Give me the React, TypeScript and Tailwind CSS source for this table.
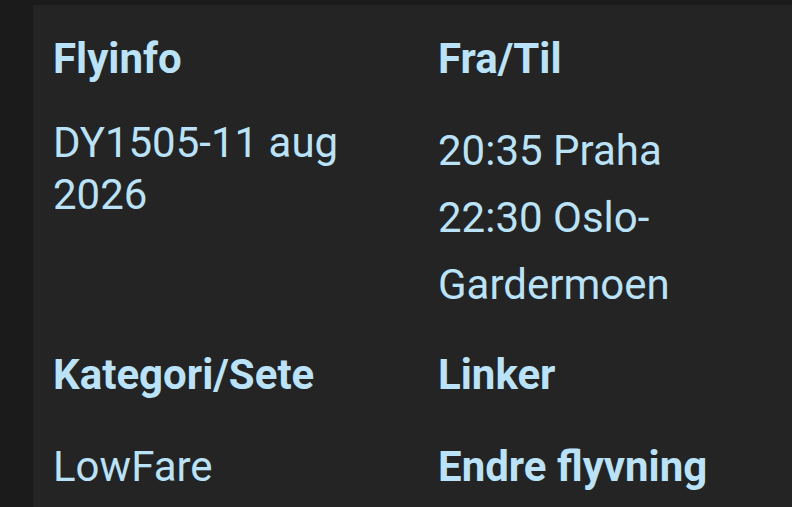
import React from 'react';

interface InfoCellProps {
  title: string;
  children: React.ReactNode;
}

const InfoCell: React.FC<InfoCellProps> = ({ title, children }) => (
  <div>
    <h3 className="text-[42px] font-bold leading-[50px]">{title}</h3>
    <div className="mt-[33px]">{children}</div>
  </div>
);

const App: React.FC = () => {
  return (
    <div className="h-[507px] w-[792px] overflow-hidden bg-[#1b1b1b] pt-[5px] pl-[33px] font-['Roboto',sans-serif] text-[#bae2f8]">
      <div className="h-full bg-[#242424] pl-[20px] pt-[29px]">
        <div className="grid grid-cols-[385px_1fr] gap-y-[32px]">
          {/* Flight info */}
          <InfoCell title="Flyinfo">
            <p className="w-[340px] text-[42px] leading-[52px]">DY1505-11 aug 2026</p>
          </InfoCell>

          {/* From / to */}
          <InfoCell title="Fra/Til">
            <p className="text-[42px] leading-[67px]">20:35 Praha</p>
            <p className="w-[320px] text-[42px] leading-[67px]">22:30 Oslo-Gardermoen</p>
          </InfoCell>

          <InfoCell title="Kategori/Sete">
            <p className="text-[42px] leading-[67px]">LowFare</p>
          </InfoCell>

          <InfoCell title="Linker">
            <a className="text-[42px] font-bold leading-[67px]">Endre flyvning</a>
          </InfoCell>
        </div>
      </div>
    </div>
  );
};

export default App;
